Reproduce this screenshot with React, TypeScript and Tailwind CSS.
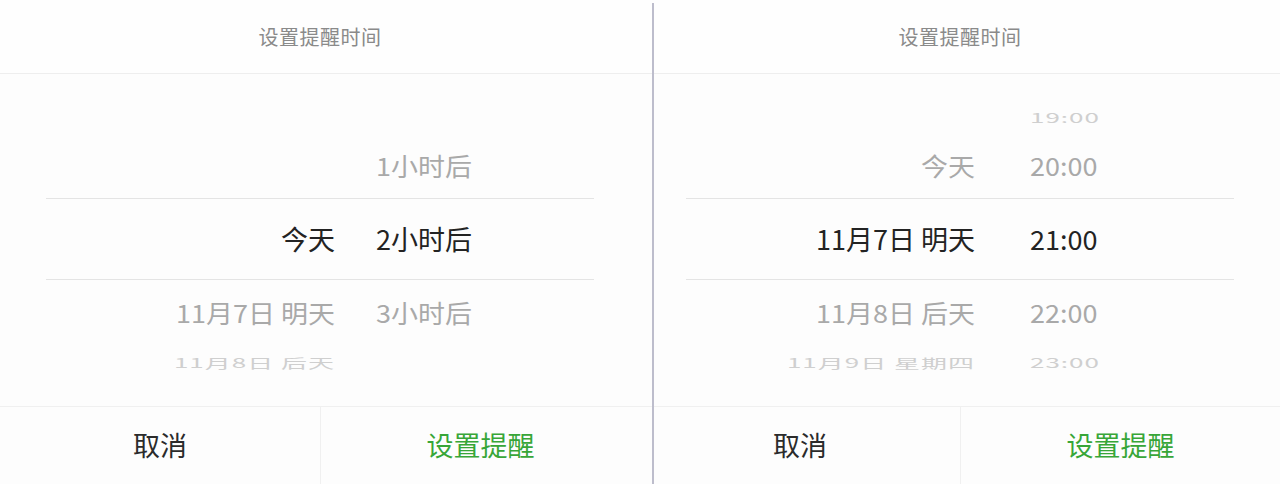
import React from "react";

type Row = { d: string; t: string };

const font = { fontFamily: '"Noto Sans CJK SC", "Noto Sans", sans-serif' };

function Panel({
  far1,
  near1,
  sel,
  near2,
  far2,
  gap,
}: {
  far1: Row;
  near1: Row;
  sel: Row;
  near2: Row;
  far2: Row;
  gap: number;
}) {
  const rightCol = gap === 41 ? "pl-[41px]" : "pl-[55px]";
  return (
    <div className="w-[640px] h-[484px] flex flex-col bg-[#fdfdfd]">
      <div className="h-[74px] shrink-0 flex items-center justify-center border-b border-[#eeeeee] bg-[#fefefe]">
        <span className="text-[20px] text-[#8a8a8a] tracking-[0.5px]">设置提醒时间</span>
      </div>
      <div className="h-[332px] shrink-0 flex flex-col">
        <div className="h-[24px]" />
        <div className="h-[38px] flex items-center text-[26px] text-[#cfcfcf] scale-y-[0.5] tracking-[1px]">
          <div className="w-[335px] text-right whitespace-nowrap">{far1.d}</div>
          <div className={`${rightCol} whitespace-nowrap`}>{far1.t}</div>
        </div>
        <div className="h-[62px] pb-[2px] flex items-center text-[27px] text-[#a9a9a9] scale-y-[0.92]">
          <div className="w-[335px] text-right whitespace-nowrap">{near1.d}</div>
          <div className={`${rightCol} whitespace-nowrap`}>{near1.t}</div>
        </div>
        <div className="h-[82px] mx-[46px] border-y border-[#e4e4e4] flex items-center text-[27px] text-[#232323]">
          <div className="w-[289px] text-right whitespace-nowrap">{sel.d}</div>
          <div className={`${rightCol} whitespace-nowrap`}>{sel.t}</div>
        </div>
        <div className="h-[68px] pb-[2px] flex items-center text-[27px] text-[#a9a9a9] scale-y-[0.92]">
          <div className="w-[335px] text-right whitespace-nowrap">{near2.d}</div>
          <div className={`${rightCol} whitespace-nowrap`}>{near2.t}</div>
        </div>
        <div className="h-[28px] flex items-center text-[26px] text-[#cfcfcf] scale-y-[0.5] tracking-[1px]">
          <div className="w-[335px] text-right whitespace-nowrap">{far2.d}</div>
          <div className={`${rightCol} whitespace-nowrap`}>{far2.t}</div>
        </div>
      </div>
      <div className="flex-1 flex border-t border-[#f0f0f0] bg-[#fdfdfd]">
        <div className="w-[320px] flex items-center justify-center text-[27px] text-[#2b2b2b]">取消</div>
        <div className="flex-1 flex items-center justify-center border-l border-[#f0f0f0] text-[27px] text-[#38a638]">
          设置提醒
        </div>
      </div>
    </div>
  );
}

export default function App() {
  return (
    <div className="relative flex w-[1280px] h-[484px] bg-white overflow-hidden" style={font}>
      <Panel
        far1={{ d: "", t: "" }}
        near1={{ d: "", t: "1小时后" }}
        sel={{ d: "今天", t: "2小时后" }}
        near2={{ d: "11月7日 明天", t: "3小时后" }}
        far2={{ d: "11月8日 后天", t: "" }}
        gap={41}
      />
      <Panel
        far1={{ d: "", t: "19:00" }}
        near1={{ d: "今天", t: "20:00" }}
        sel={{ d: "11月7日 明天", t: "21:00" }}
        near2={{ d: "11月8日 后天", t: "22:00" }}
        far2={{ d: "11月9日 星期四", t: "23:00" }}
        gap={55}
      />
      <div className="absolute left-[652px] top-[3px] bottom-0 w-[2px] bg-[#bdbdcc]" />
    </div>
  );
}
